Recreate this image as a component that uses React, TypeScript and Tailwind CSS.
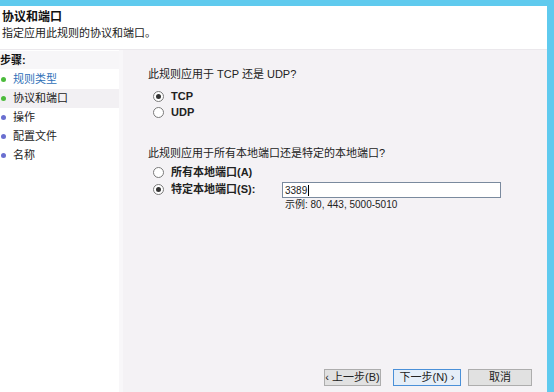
const font = { fontFamily: '"Liberation Sans", "Noto Sans CJK SC", sans-serif' };

function Radio({ checked }: { checked?: boolean }) {
  return (
    <span className="relative inline-flex size-[11px] shrink-0 items-center justify-center rounded-full border border-[#7a7a7a] bg-white">
      {checked && <span className="size-[5px] rounded-full bg-[#333]" />}
    </span>
  );
}

function Step({ label, color, active, current }: { label: string; color: string; active?: boolean; current?: boolean }) {
  return (
    <div className={`flex h-[19px] items-center gap-[7px] pl-[1px] ${current ? 'bg-[#f2f0f3]' : ''}`}>
      <span className="size-[5px] rounded-full" style={{ background: color }} />
      <span className={`text-[11px] ${active ? 'text-[#2f6fb8]' : 'text-[#222]'}`}>{label}</span>
    </div>
  );
}

function Btn({ children, focus, width }: { children: React.ReactNode; focus?: boolean; width: string }) {
  return (
    <button
      className={`flex h-[17px] items-center justify-center border text-[11px] text-[#222] ${width} ${
        focus ? 'border-[#4a90d8] bg-[#e5eef8]' : 'border-[#adadad] bg-[#e1e1e1]'
      }`}
    >
      {children}
    </button>
  );
}

export default function App() {
  return (
    <div className="flex h-[392px] w-[554px] flex-col overflow-hidden bg-[#5fcaee]" style={font}>
      <div className="mt-[6px] mr-[7px] flex flex-1 flex-col bg-white">
        {/* Header */}
        <div className="h-[44px] border-b border-[#ebe8ec] px-[2px] pt-[3px]">
          <div className="text-[12px] font-bold leading-[16px] text-[#111]">协议和端口</div>
          <div className="mt-[1px] text-[11px] leading-[14px] text-[#222]">指定应用此规则的协议和端口。</div>
        </div>

        <div className="flex flex-1">
          {/* Sidebar */}
          <div className="w-[123px] border-r-[4px] border-[#f8f7f9] bg-white">
            <div className="mt-[1px] flex h-[18px] items-center bg-[#f7f6f8] text-[11px] font-bold text-[#111]">步骤:</div>
            <div className="mt-[1px]">
              <Step label="规则类型" color="#4cbb3c" active />
              <Step label="协议和端口" color="#4cbb3c" current />
              <Step label="操作" color="#6a6fd0" />
              <Step label="配置文件" color="#6a6fd0" />
              <Step label="名称" color="#6a6fd0" />
            </div>
          </div>

          {/* Content */}
          <div className="flex flex-1 flex-col bg-[#f4f2f5] pl-[25px] text-[11px] text-[#222]">
            <div className="mt-[17px] leading-[14px]">此规则应用于 TCP 还是 UDP?</div>
            <div className="mt-[9px] flex flex-col gap-[4px] pl-[5px]">
              <label className="flex h-[12px] items-center gap-[7px] font-bold"><Radio checked />TCP</label>
              <label className="flex h-[12px] items-center gap-[7px] font-bold"><Radio />UDP</label>
            </div>

            <div className="mt-[28px] leading-[14px]">此规则应用于所有本地端口还是特定的本地端口?</div>
            <div className="mt-[6px] flex flex-col gap-[4px] pl-[5px]">
              <label className="flex h-[12px] items-center gap-[7px] font-bold"><Radio />所有本地端口(A)</label>
              <div className="flex items-start">
                <label className="mt-[1px] flex h-[12px] w-[129px] items-center gap-[7px] font-bold"><Radio checked />特定本地端口(S):</label>
                <div className="flex flex-col">
                  <div className="flex h-[16px] w-[219px] items-center border border-[#7a8a9e] bg-white px-[2px] text-[10px]">
                    3389<span className="ml-[1px] h-[11px] w-px bg-black" />
                  </div>
                  <div className="pl-[3px] text-[10px] leading-[14px]">示例: 80, 443, 5000-5010</div>
                </div>
              </div>
            </div>

            <div className="mt-auto mb-[6px] flex justify-end gap-[7px] pr-[15px]">
              <div className="flex gap-[12px]">
                <Btn width="w-[57px]">‹ 上一步(B)</Btn>
                <Btn width="w-[68px]" focus>下一步(N) ›</Btn>
              </div>
              <Btn width="w-[64px]">取消</Btn>
            </div>
          </div>
        </div>
      </div>
    </div>
  );
}
